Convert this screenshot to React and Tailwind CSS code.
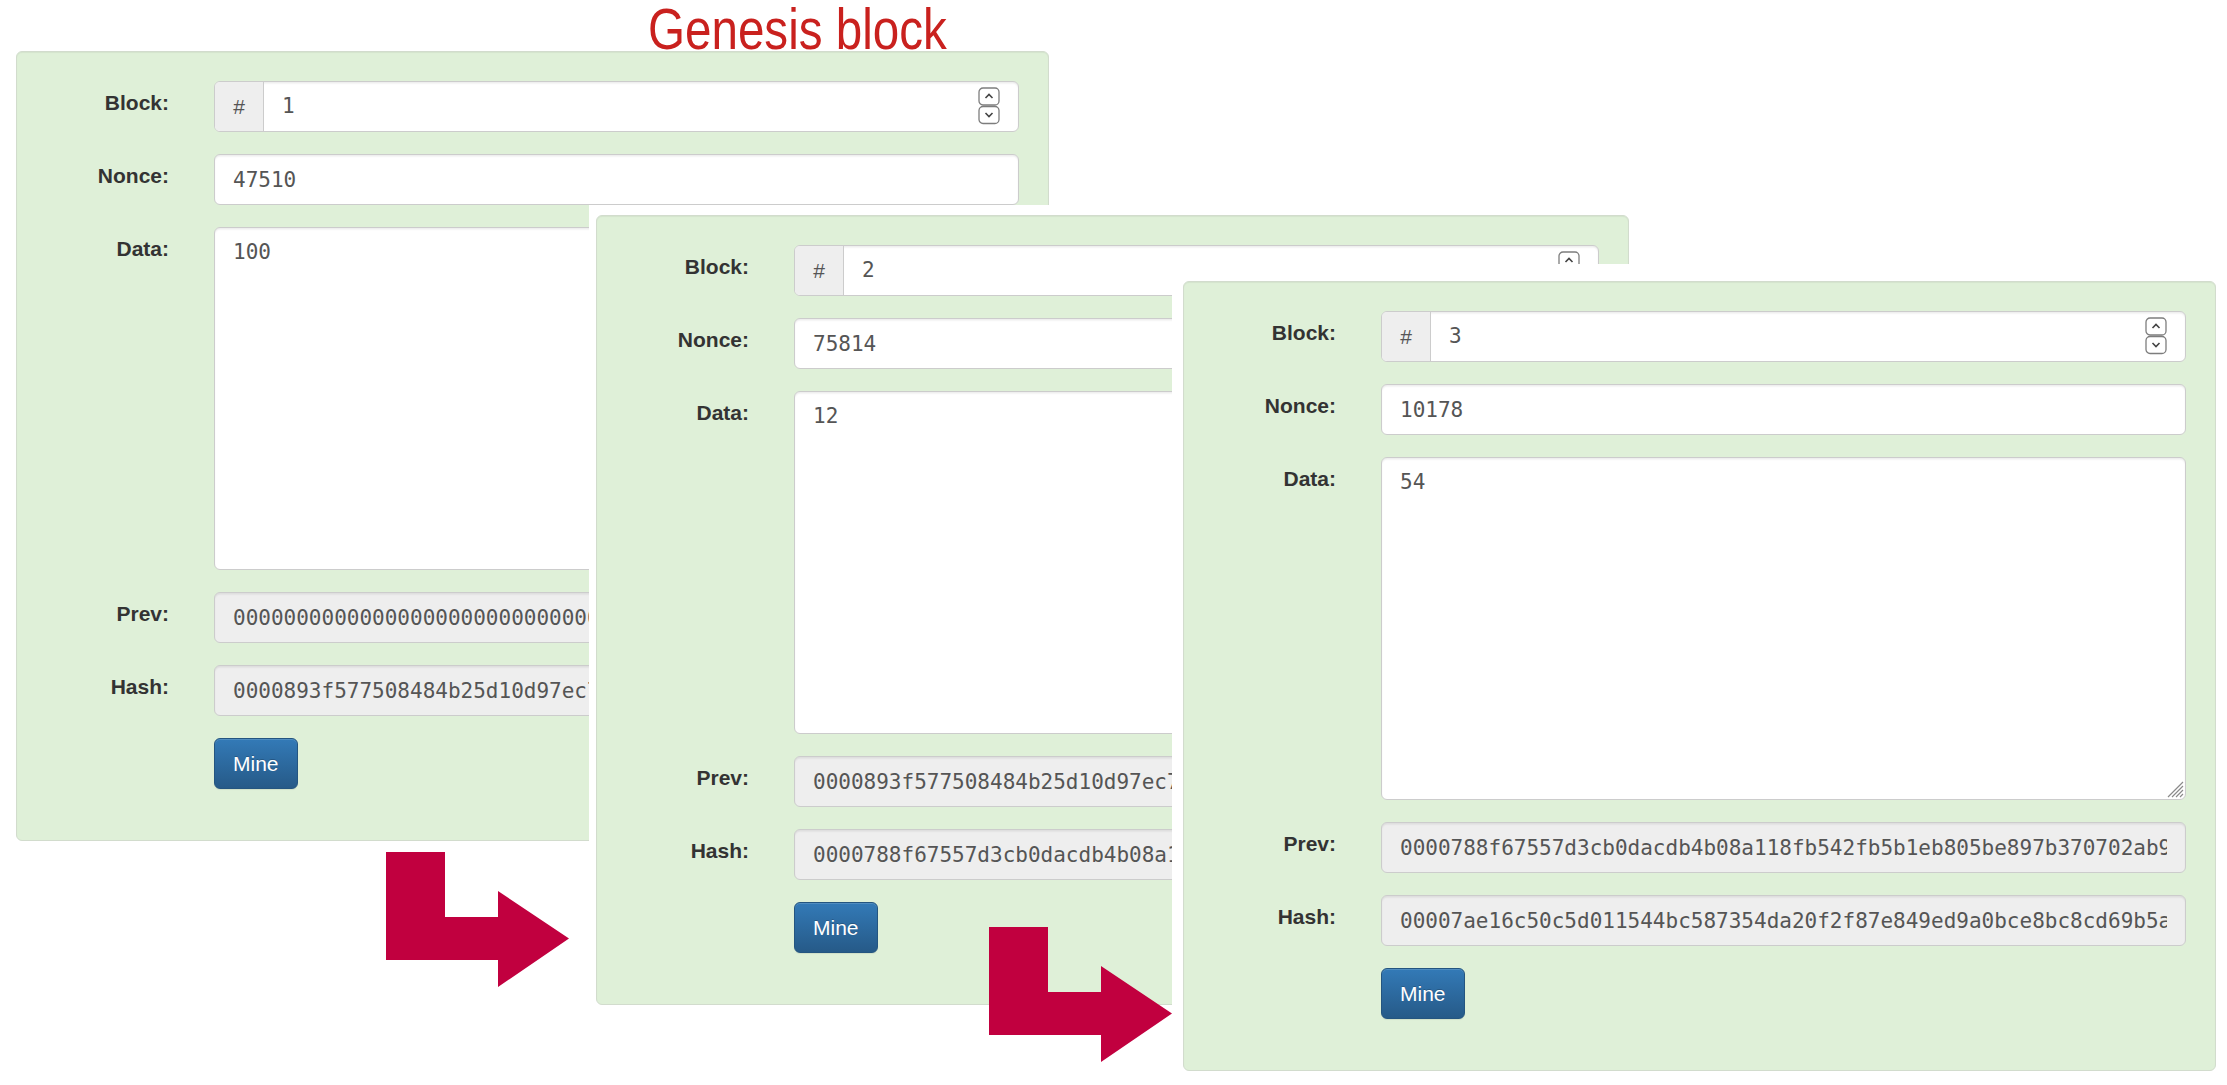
import React from 'react';

const blocks = [
  {
    num: '1',
    nonce: '47510',
    data: '100',
    prev: '0000000000000000000000000000000000000000000000000000000000000000',
    hash: '0000893f577508484b25d10d97ec7b1a4c2e9d0f6b3a85e17c2d9f4e6a0b3c58',
  },
  {
    num: '2',
    nonce: '75814',
    data: '12',
    prev: '0000893f577508484b25d10d97ec7b1a4c2e9d0f6b3a85e17c2d9f4e6a0b3c58',
    hash: '0000788f67557d3cb0dacdb4b08a118fb542fb5b1eb805be897b370702ab9e1c',
  },
  {
    num: '3',
    nonce: '10178',
    data: '54',
    prev: '0000788f67557d3cb0dacdb4b08a118fb542fb5b1eb805be897b370702ab9e1c',
    hash: '00007ae16c50c5d011544bc587354da20f2f87e849ed9a0bce8bc8cd69b5a3f0',
  },
];

const Spinner = () => (
  <svg width="22" height="38" viewBox="0 0 22 38" className="absolute right-[18px] top-[5px]">
    <rect x="1" y="1" width="20" height="17" rx="4" fill="#fff" stroke="#7d7d7d" strokeWidth="1.3" />
    <rect x="1" y="19.5" width="20" height="17" rx="4" fill="#fff" stroke="#7d7d7d" strokeWidth="1.3" />
    <path d="M7.5 11 L11 7.5 L14.5 11" fill="none" stroke="#444" strokeWidth="1.6" />
    <path d="M7.5 26 L11 29.5 L14.5 26" fill="none" stroke="#444" strokeWidth="1.6" />
  </svg>
);

const Grip = () => (
  <svg width="20" height="20" viewBox="0 0 20 20" className="absolute right-[2px] bottom-[2px] pointer-events-none">
    <path d="M19 4 L4 19 M19 8 L8 19 M19 12 L12 19 M19 16 L16 19" stroke="#8a8a8a" strokeWidth="1.2" />
  </svg>
);

const Arrow = () => (
  <svg width="184" height="136" viewBox="0 0 184 136">
    <polygon
      points="0,0 59,0 59,65 112,65 112,39 183,86.5 112,135 112,108 0,108"
      fill="#c1003f"
    />
  </svg>
);

const mono = "font-['DejaVu_Sans_Mono',monospace] text-[21px] text-[#555]";
const field =
  'h-[51px] w-full rounded-[6px] border border-[#ccc] px-[18px] outline-none shadow-[inset_0_1.5px_1.5px_rgba(0,0,0,0.075)]';

const Label = ({ children }) => (
  <label className="pt-[7px] text-right font-['Liberation_Sans',Arial,sans-serif] text-[21px] font-bold leading-[30px] text-[#333]">
    {children}
  </label>
);

const BlockCard = ({ block }) => (
  <div className="h-[790px] w-[1033px] rounded-[6px] border border-[#d2dccd] bg-[#dff0d8] pr-[29px] pt-[29px] shadow-[inset_0_1px_1px_rgba(0,0,0,0.05)]">
    <div className="grid grid-cols-[152px_1fr] gap-x-[45px] gap-y-[22px]">
      <Label>Block:</Label>
      <div className="relative flex h-[51px] overflow-hidden rounded-[6px] border border-[#ccc] bg-white shadow-[inset_0_1.5px_1.5px_rgba(0,0,0,0.075)]">
        <span className="flex w-[49px] items-center justify-center border-r border-[#ccc] bg-[#eee] font-['Liberation_Sans',Arial,sans-serif] text-[21px] text-[#555]">
          #
        </span>
        <input readOnly value={block.num} className={`flex-1 bg-transparent pl-[18px] outline-none ${mono}`} />
        <Spinner />
      </div>

      <Label>Nonce:</Label>
      <input readOnly value={block.nonce} className={`${field} bg-white ${mono}`} />

      <Label>Data:</Label>
      <div className="relative">
        <textarea
          readOnly
          value={block.data}
          className={`block h-[343px] w-full resize-none rounded-[6px] border border-[#ccc] bg-white px-[18px] py-[9px] leading-[30px] outline-none shadow-[inset_0_1.5px_1.5px_rgba(0,0,0,0.075)] ${mono}`}
        />
        <Grip />
      </div>

      <Label>Prev:</Label>
      <input readOnly value={block.prev} className={`${field} bg-[#eee] ${mono}`} />

      <Label>Hash:</Label>
      <input readOnly value={block.hash} className={`${field} bg-[#eee] ${mono}`} />

      <div />
      <div>
        <button className="h-[51px] rounded-[6px] border border-[#245580] bg-gradient-to-b from-[#337ab7] to-[#265a88] px-[18px] font-['Liberation_Sans',Arial,sans-serif] text-[21px] text-white shadow-[inset_0_1px_0_rgba(255,255,255,0.15),0_1px_1px_rgba(0,0,0,0.075)] [text-shadow:0_-1px_0_rgba(0,0,0,0.2)]">
          Mine
        </button>
      </div>
    </div>
  </div>
);

export default function App() {
  return (
    <div className="relative h-[1085px] w-[2227px] overflow-hidden bg-white">
      <div className="absolute left-[16px] top-[51px]">
        <BlockCard block={blocks[0]} />
      </div>

      <div className="absolute left-[648px] top-[7px] origin-left scale-x-[0.82] font-['Liberation_Sans',Arial,sans-serif] text-[58px] leading-[44px] text-[#c9211e]">
        Genesis block
      </div>

      <div className="absolute left-[386px] top-[852px]">
        <Arrow />
      </div>

      <div className="absolute left-[589px] top-[205px] bg-white pb-[8px] pl-[7px] pr-[8px] pt-[10px]">
        <BlockCard block={blocks[1]} />
      </div>

      <div className="absolute left-[989px] top-[927px]">
        <Arrow />
      </div>

      <div className="absolute left-[1172px] top-[264px] bg-white pb-[14px] pl-[11px] pr-[11px] pt-[17px]">
        <BlockCard block={blocks[2]} />
      </div>
    </div>
  );
}
